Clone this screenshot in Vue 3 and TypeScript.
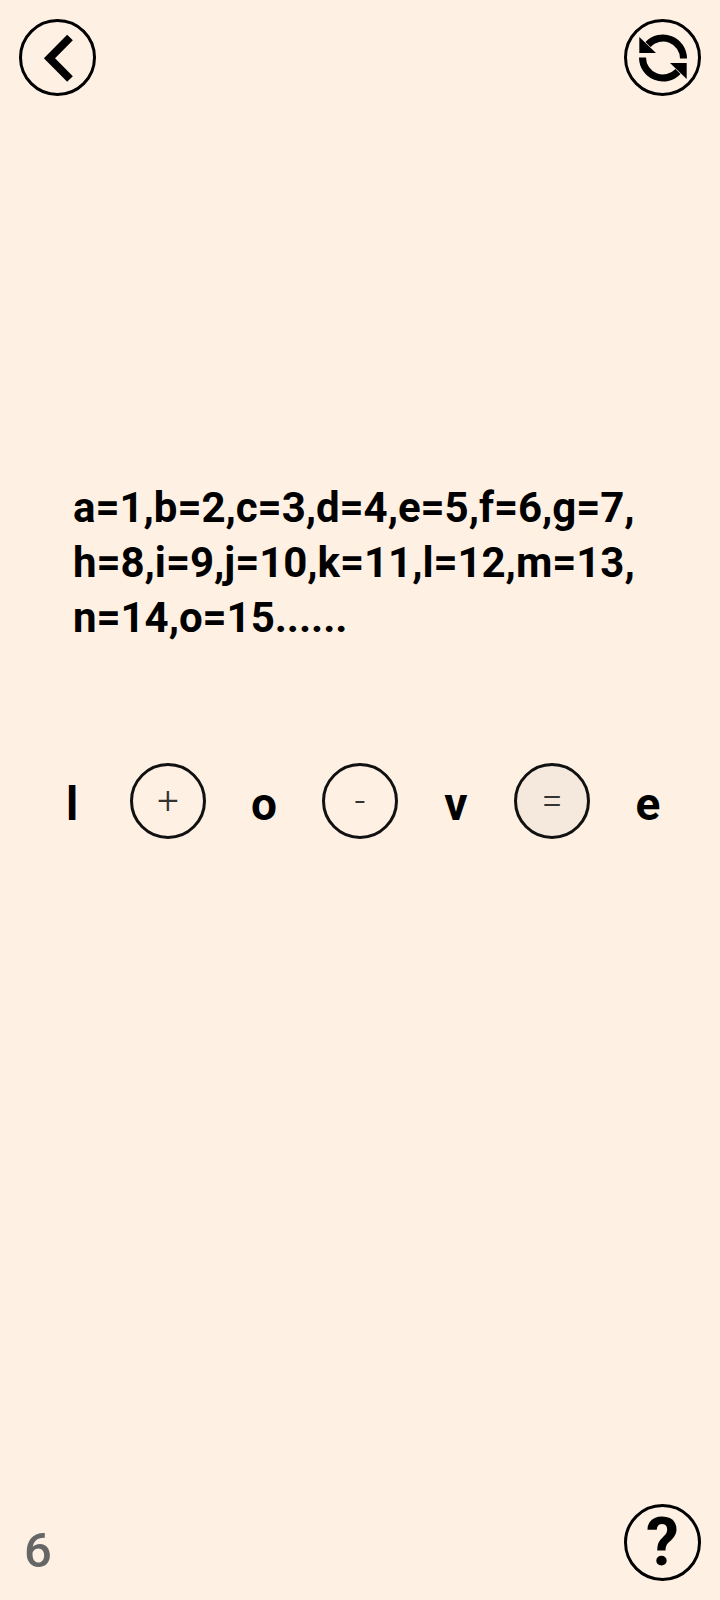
<script setup lang="ts">
interface Cell { text: string; kind: 'letter' | 'op'; active?: boolean }
const lines: string[] = [
  'a=1,b=2,c=3,d=4,e=5,f=6,g=7,',
  'h=8,i=9,j=10,k=11,l=12,m=13,',
  'n=14,o=15......',
]
const cells: Cell[] = [
  { text: 'l', kind: 'letter' },
  { text: '+', kind: 'op' },
  { text: 'o', kind: 'letter' },
  { text: '-', kind: 'op' },
  { text: 'v', kind: 'letter' },
  { text: '=', kind: 'op', active: true },
  { text: 'e', kind: 'letter' },
]
</script>

<template>
  <main class="page">
    <header class="top">
      <div class="round">
        <svg viewBox="0 0 76 76" width="76" height="76">
          <path d="M50 17.5 29.5 38.3 50 59" fill="none" stroke="#000" stroke-width="8" stroke-linejoin="miter" />
        </svg>
      </div>
      <div class="round">
        <svg viewBox="0 0 76 76" width="76" height="76">
          <g>
            <path d="M58.5 38.5A20.5 20.5 0 0 0 23 24.5" fill="none" stroke="#000" stroke-width="7" />
            <path d="M14.3 17V33H31Z" fill="#000" />
          </g>
          <g transform="rotate(180 38 38)">
            <path d="M58.5 38.5A20.5 20.5 0 0 0 23 24.5" fill="none" stroke="#000" stroke-width="7" />
            <path d="M14.3 17V33H31Z" fill="#000" />
          </g>
        </svg>
      </div>
    </header>

    <section class="riddle">
      <p v-for="line in lines" :key="line" class="line">{{ line }}</p>
    </section>

    <section class="equation">
      <div v-for="(cell, i) in cells" :key="i" class="cell">
        <span v-if="cell.kind === 'letter'" class="letter">{{ cell.text }}</span>
        <span v-else class="op" :class="{ active: cell.active }">{{ cell.text }}</span>
      </div>
    </section>

    <footer class="bottom">
      <span class="level">6</span>
      <div class="round help">?</div>
    </footer>
  </main>
</template>

<style>
html, body { margin: 0; padding: 0; background: #fef1e4; }
</style>

<style scoped>
.page {
  box-sizing: border-box;
  width: 720px;
  height: 1600px;
  background: #fef1e4;
  display: flex;
  flex-direction: column;
  font-family: Roboto, "Liberation Sans", sans-serif;
  color: #000;
}
.top {
  display: flex;
  justify-content: space-between;
  padding: 19px 19px 0;
}
.round {
  box-sizing: border-box;
  width: 77px;
  height: 77px;
  border: 3px solid #000;
  border-radius: 50%;
  display: flex;
  align-items: center;
  justify-content: center;
}
.round svg { flex: none; }
.riddle {
  margin-top: 384px;
  padding-left: 73px;
}
.line {
  margin: 0;
  height: 55px;
  line-height: 55px;
  font-size: 42px;
  font-weight: 700;
  letter-spacing: -0.05px;
  white-space: nowrap;
}
.equation {
  margin-top: 117px;
  padding: 0 24px;
  display: grid;
  grid-template-columns: repeat(7, 96px);
  align-items: center;
  height: 77px;
}
.cell {
  display: flex;
  justify-content: center;
  align-items: center;
}
.letter {
  font-size: 46px;
  font-weight: 700;
  line-height: 77px;
  position: relative;
  top: 4px;
}
.op {
  box-sizing: border-box;
  width: 76px;
  height: 76px;
  border: 3px solid #111;
  border-radius: 50%;
  display: flex;
  align-items: center;
  justify-content: center;
  font-size: 38px;
  font-weight: 300;
  color: #333;
}
.op.active { background: #f5e9dd; }
.bottom {
  margin-top: auto;
  padding: 0 19px 19px 24px;
  display: flex;
  justify-content: space-between;
  align-items: flex-end;
}
.level {
  font-size: 49px;
  font-weight: 500;
  color: #666;
  line-height: 54px;
  margin-bottom: 3px;
}
.help {
  font-size: 66px;
  font-weight: 700;
  line-height: 1;
}
</style>
